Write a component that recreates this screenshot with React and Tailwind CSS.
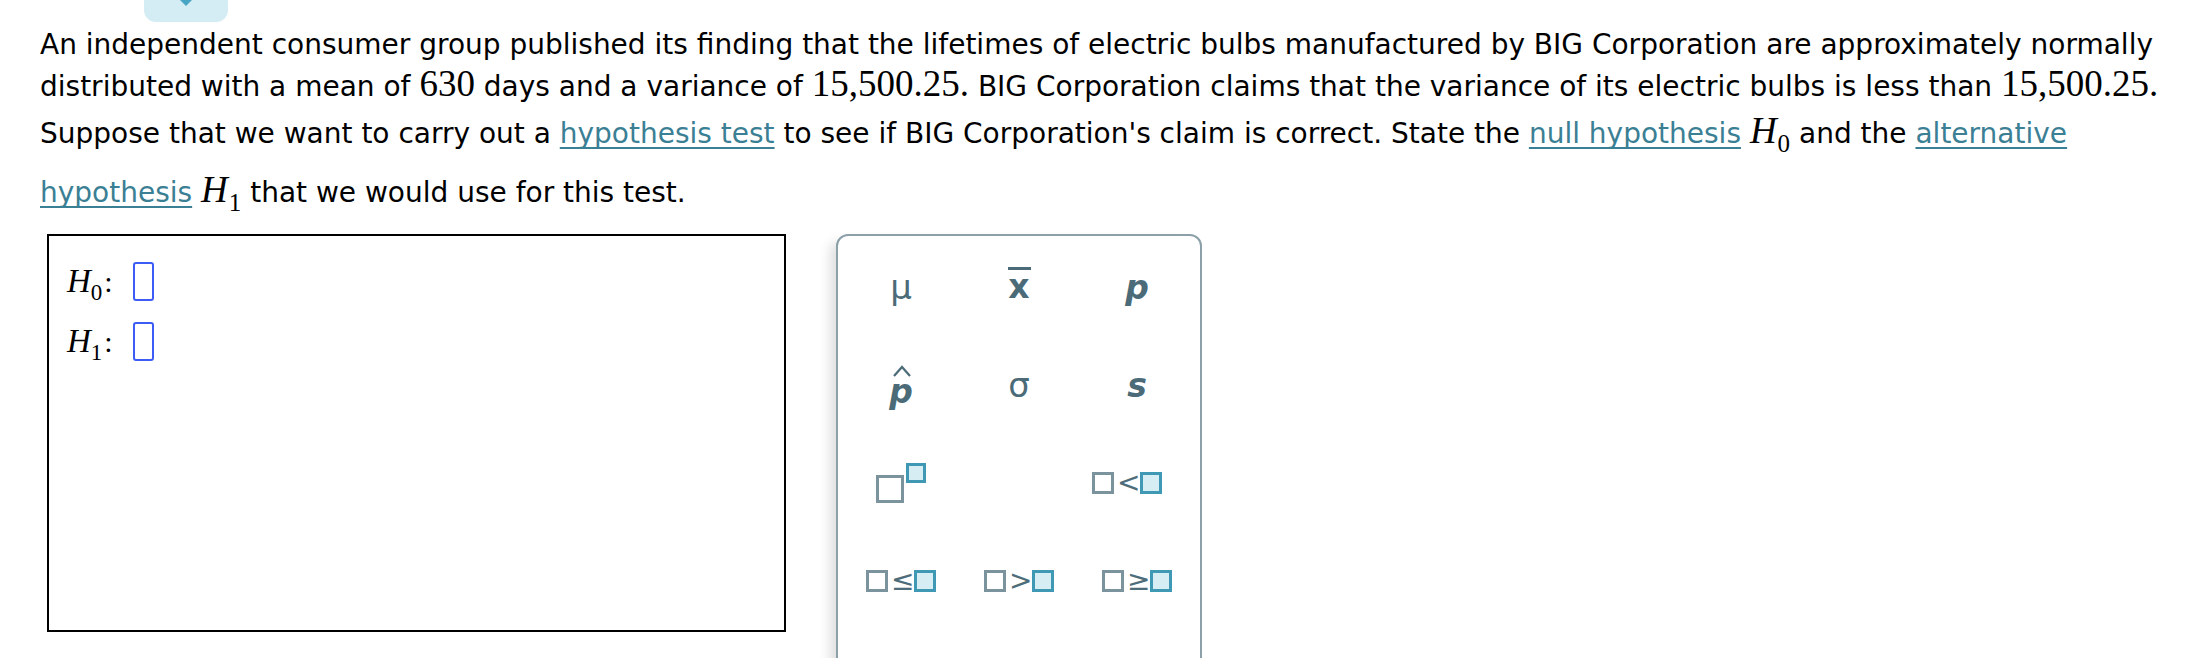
export default function App() {
  const M = ({ children }) => (
    <span className="font-['Liberation_Serif',serif] text-[37px] leading-none">{children}</span>
  );
  const H = ({ sub }) => (
    <span className="font-['Liberation_Serif',serif] leading-none whitespace-nowrap">
      <span className="italic text-[37px]">H</span>
      <span className="relative top-[9px] text-[25px] ml-[1px]">{sub}</span>
    </span>
  );
  const L = ({ children }) => (
    <span className="text-[#3b7f95] underline decoration-[2px] underline-offset-[4px] [text-decoration-skip-ink:none]">
      {children}
    </span>
  );
  const Gray = ({ c = "w-[22px] h-[22px]" }) => (
    <span className={"inline-block border-[3px] border-[#7b939d] bg-white " + c} />
  );
  const Blue = () => (
    <span className="inline-block w-[22px] h-[22px] border-[3px] border-[#3f99b5] bg-[#d5edf3]" />
  );
  const Rel = ({ ch }) => (
    <div className="flex items-center gap-[3px]">
      <Gray />
      <span className="font-['DejaVu_Sans',sans-serif] text-[28px] leading-none text-[#4d6d7a] w-[20px] text-center">{ch}</span>
      <Blue />
    </div>
  );
  const sym = "font-['DejaVu_Sans',sans-serif] text-[#4b6b78] leading-none";

  return (
    <div className="h-[658px] overflow-hidden bg-white font-['DejaVu_Sans',Verdana,sans-serif] text-black">
      <div className="ml-[144px] w-[84px] h-[22px] rounded-b-[12px] bg-[#d4ecf3] flex justify-center">
        <svg width="14" height="8" viewBox="0 0 14 8">
          <path d="M1 0 L7 6 L13 0 Z" fill="#48a6c4" />
        </svg>
      </div>

      <div className="pl-[40px] pt-[2px] text-[28px] leading-[41px] whitespace-nowrap">
        <div>
          An independent consumer group published its finding that the lifetimes of electric bulbs manufactured by BIG Corporation are approximately normally
        </div>
        <div>
          distributed with a mean of <M>630</M> days and a variance of <M>15,500.25.</M> BIG Corporation claims that the variance of its electric bulbs is less than <M>15,500.25.</M>
        </div>
        <div className="mt-[5px]">
          Suppose that we want to carry out a <L>hypothesis test</L> to see if BIG Corporation's claim is correct. State the <L>null hypothesis</L> <H sub="0" /> and the <L>alternative</L>
        </div>
        <div className="mt-[17px]">
          <L>hypothesis</L> <H sub="1" /> that we would use for this test.
        </div>
      </div>

      <div className="flex items-start mt-[21px] pl-[47px]">
        <div className="w-[739px] h-[398px] border-2 border-black pl-[18px] pt-[26px] flex flex-col gap-[21px]">
          {["0", "1"].map((s) => (
            <div key={s} className="flex items-center h-[39px]">
              <span className="font-['Liberation_Serif',serif] leading-none">
                <span className="italic text-[33px]">H</span>
                <span className="relative top-[8px] text-[23px]">{s}</span>
                <span className="text-[30px] ml-[2px]">:</span>
              </span>
              <span className="ml-[20px] w-[21px] h-[39px] border-2 border-[#3d5cf5] rounded-[3px]" />
            </div>
          ))}
        </div>

        <div className="ml-[50px] w-[366px] h-[440px] shrink-0 border-2 border-[#8ca0a9] rounded-[12px] bg-white shadow-[-10px_4px_12px_-4px_rgba(0,0,0,0.13)] px-[4px] pt-[2px] grid grid-cols-3 auto-rows-[98px]">
          <div className="flex items-center justify-center">
            <span className={sym + " text-[34px]"}>μ</span>
          </div>
          <div className="flex items-center justify-center">
            <div className="flex flex-col items-center relative -top-[2px]">
              <span className="block w-[23px] h-[3px] bg-[#4b6b78]" />
              <span className={sym + " text-[33px] font-bold leading-[26px]"}>x</span>
            </div>
          </div>
          <div className="flex items-center justify-center">
            <span className={sym + " text-[33px] font-bold italic"}>p</span>
          </div>

          <div className="flex items-center justify-center">
            <div className="flex flex-col items-center">
              <svg width="20" height="12" viewBox="0 0 20 12" className="relative left-[1px] top-[2px]">
                <path d="M2 11 L10 2 L18 11" fill="none" stroke="#4b6b78" strokeWidth="2.2" />
              </svg>
              <span className={sym + " text-[33px] font-bold italic leading-[22px]"}>p</span>
            </div>
          </div>
          <div className="flex items-center justify-center">
            <span className={sym + " text-[34px] font-medium"}>σ</span>
          </div>
          <div className="flex items-center justify-center">
            <span className={sym + " text-[33px] font-bold italic"}>s</span>
          </div>

          <div className="flex items-center justify-center">
            <div className="flex items-start">
              <span className="mt-[12px] inline-block w-[28px] h-[28px] border-[3px] border-[#7b939d]" />
              <span className="ml-[2px] inline-block w-[20px] h-[20px] border-[3px] border-[#3f99b5] bg-[#d5edf3]" />
            </div>
          </div>
          <div />
          <div className="flex items-center justify-center pr-[20px]">
            <Rel ch="<" />
          </div>

          <div className="flex items-center justify-center">
            <Rel ch="≤" />
          </div>
          <div className="flex items-center justify-center">
            <Rel ch=">" />
          </div>
          <div className="flex items-center justify-center">
            <Rel ch="≥" />
          </div>
        </div>
      </div>
    </div>
  );
}
